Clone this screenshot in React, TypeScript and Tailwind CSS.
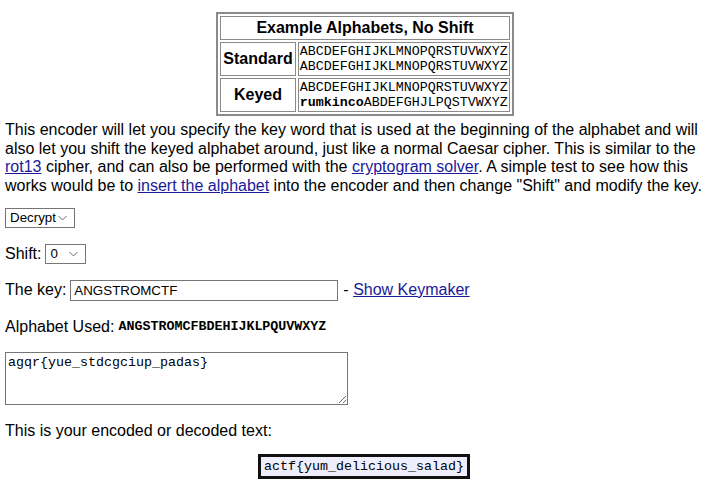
import { useState } from "react";

const sans = "font-['Liberation_Sans',Arial,sans-serif]";
const mono = "font-['Liberation_Mono','Courier_New',monospace]";
const alpha = "ABCDEFGHIJKLMNOPQRSTUVWXYZ";

function Chevron() {
  return (
    <svg width="9" height="5" viewBox="0 0 9 5" className="absolute right-[8px] top-1/2 -translate-y-1/2 pointer-events-none">
      <path d="M0.5 0.5 L4.5 4.5 L8.5 0.5" fill="none" stroke="#6d6d6d" strokeWidth="1" />
    </svg>
  );
}

function Select({ value, options, width }: { value: string; options: string[]; width: string }) {
  const [v, setV] = useState(value);
  return (
    <span className={`relative inline-block align-middle ${width}`}>
      <select
        value={v}
        onChange={(e) => setV(e.target.value)}
        className={`appearance-none w-full h-[20px] border border-[#767676] bg-white pl-[4px] text-[13.33px] text-black ${sans} outline-none`}
      >
        {options.map((o) => (
          <option key={o}>{o}</option>
        ))}
      </select>
      <Chevron />
    </span>
  );
}

export default function App() {
  const [key, setKey] = useState("ANGSTROMCTF");
  const [text, setText] = useState("agqr{yue_stdcgciup_padas}");

  return (
    <div className={`w-[714px] h-[494px] overflow-hidden bg-white text-black text-[16px] leading-[18.4px] ${sans} px-[5px]`}>
      <div className="flex justify-center pt-[12px] pl-[16px]">
        <table className="border-separate border-spacing-[2px] border-2 border-[#8a8a8a]">
          <tbody>
            <tr>
              <th colSpan={2} className="border border-[#8a8a8a] px-[3px] py-[2px] text-[16px] font-bold">
                Example Alphabets, No Shift
              </th>
            </tr>
            <tr>
              <th className="border border-[#8a8a8a] px-[2px] font-bold">Standard</th>
              <td className={`border border-[#8a8a8a] px-[1px] py-[1px] text-[13.33px] leading-[15px] ${mono}`}>
                {alpha}
                <br />
                {alpha}
              </td>
            </tr>
            <tr>
              <th className="border border-[#8a8a8a] px-[2px] font-bold">Keyed</th>
              <td className={`border border-[#8a8a8a] px-[1px] py-[1px] text-[13.33px] leading-[15px] ${mono}`}>
                {alpha}
                <br />
                <b>rumkinco</b>ABDEFGHJLPQSTVWXYZ
              </td>
            </tr>
          </tbody>
        </table>
      </div>

      <p className="mt-[5px]">
        This encoder will let you specify the key word that is used at the beginning of the alphabet and will
        also let you shift the keyed alphabet around, just like a normal Caesar cipher. This is similar to the{" "}
        <a href="#" className="text-[#1a1a99] underline">rot13</a> cipher, and can also be performed with the{" "}
        <a href="#" className="text-[#1a1a99] underline">cryptogram solver</a>. A simple test to see how this
        works would be to <a href="#" className="text-[#1a1a99] underline">insert the alphabet</a> into the encoder
        and then change "Shift" and modify the key.
      </p>

      <div className="mt-[13px] h-[20px] flex items-center">
        <Select value="Decrypt" options={["Encrypt", "Decrypt"]} width="w-[70px]" />
      </div>

      <div className="mt-[16px] h-[20px] flex items-center gap-[4px]">
        <span>Shift:</span>
        <Select value="0" options={["0", "1", "2", "3", "4", "5"]} width="w-[41px]" />
      </div>

      <div className="mt-[15px] h-[22px] flex items-center">
        <span className="mr-[4px]">The key:</span>
        <input
          value={key}
          onChange={(e) => setKey(e.target.value)}
          className={`w-[268px] h-[21px] border border-[#767676] px-[3px] text-[13.33px] ${sans} outline-none`}
        />
        <span className="ml-[5px]">
          - <a href="#" className="text-[#1a1a99] underline">Show Keymaker</a>
        </span>
      </div>

      <div className="mt-[16px] h-[20px] flex items-center">
        <span>Alphabet Used:</span>
        <span className={`ml-[4px] text-[13.33px] font-bold ${mono}`}>ANGSTROMCFBDEHIJKLPQUVWXYZ</span>
      </div>

      <textarea
        value={text}
        onChange={(e) => setText(e.target.value)}
        className={`block mt-[15px] w-[343px] h-[53px] border border-[#767676] px-[2px] py-[2px] text-[13.33px] leading-[15px] ${mono} outline-none resize`}
      />

      <p className="mt-[17px]">This is your encoded or decoded text:</p>

      <div className="mt-[14px] flex justify-center pl-[14px]">
        <div className={`h-[25px] flex items-center border-[3px] border-[#111] bg-[#eeeefc] px-[3px] text-[13.33px] leading-[15px] ${mono}`}>
          actf{"{"}yum_delicious_salad{"}"}
        </div>
      </div>
    </div>
  );
}
